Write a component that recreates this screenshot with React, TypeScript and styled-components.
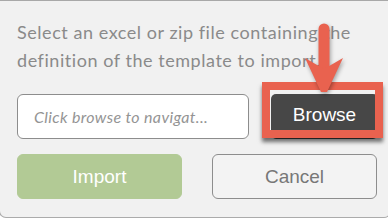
import React, { FC } from 'react';
import styled, { createGlobalStyle } from 'styled-components';

const Global = createGlobalStyle`
  html, body { margin: 0; padding: 0; background: #ffffff; }
  body { width: 388px; height: 218px; overflow: hidden; }
`;

const Panel = styled.div`
  position: relative;
  box-sizing: border-box;
  width: 392px;
  height: 218px;
  margin-left: -1px;
  background: #f1f1f1;
  border: 1px solid #ababab;
  border-top-color: #a8a8a8;
  border-radius: 0 0 7px 7px;
  padding: 17px 0 0 17px;
`;

const Message = styled.p`
  margin: 0;
  font-family: Lato, 'Liberation Sans', sans-serif;
  font-size: 18px;
  letter-spacing: 0.55px;
  line-height: 28px;
  color: #8a8a8a;
  width: 352px;
`;

const Row = styled.div<{ gap: number }>`
  display: flex;
  align-items: stretch;
  gap: ${(p) => p.gap}px;
  height: 45px;
`;

const FileRow = styled(Row)`
  margin-top: 20px;
`;

const ActionRow = styled(Row)`
  margin-top: 15px;
`;

const PathInput = styled.input`
  box-sizing: border-box;
  width: 232px;
  height: 45px;
  border: 1px solid #8d8d8d;
  border-radius: 6px;
  background: #ffffff;
  padding: 0 15px 0 16px;
  font-family: Lato, 'Liberation Sans', sans-serif;
  font-size: 16px;
  letter-spacing: 0.35px;
  font-style: italic;
  color: #888;
  outline: none;
  &::placeholder { color: #949494; }
`;

const BrowseButton = styled.button`
  box-sizing: border-box;
  width: 107px;
  border: none;
  border-radius: 5px;
  background: #474747;
  color: #ffffff;
  font-family: 'Liberation Sans', Arial, sans-serif;
  font-size: 19px;
  padding: 0 0 3px;
`;

const ActionButton = styled.button<{ primary?: boolean }>`
  box-sizing: border-box;
  width: 165px;
  border-radius: 6px;
  border: 1px solid ${(p) => (p.primary ? '#b2ca95' : '#8d8d8d')};
  background: ${(p) => (p.primary ? '#b2ca95' : '#f3f3f3')};
  color: ${(p) => (p.primary ? '#ffffff' : '#777777')};
  font-family: 'Liberation Sans', Arial, sans-serif;
  font-size: 19px;
`;

const Highlight = styled.div`
  position: absolute;
  left: 262px;
  top: 81px;
  width: 121px;
  height: 56px;
  box-sizing: border-box;
  border: 8px solid #e9624f;
  box-shadow: 0 4px 4px rgba(0, 0, 0, 0.55);
  pointer-events: none;
`;

const Arrow = styled.svg`
  position: absolute;
  left: 300px;
  top: 18px;
  overflow: visible;
  filter: drop-shadow(1px 2px 2px rgba(0, 0, 0, 0.35));
  pointer-events: none;
`;

const DownArrow: FC = () => (
  <Arrow width="50" height="76" viewBox="0 0 50 76">
    <line x1="24" y1="10" x2="24" y2="55" stroke="#e9624f" strokeWidth="11" strokeLinecap="round" />
    <path d="M5 39 L24 50 L43 39 L27 73 L21 73 Z" fill="#e9624f" />
  </Arrow>
);

export default function App() {
  return (
    <>
      <Global />
      <Panel>
        <Message>
          Select an excel or zip file containing the definition of the template to import.
        </Message>
        <FileRow gap={22}>
          <PathInput placeholder="Click browse to navigat..." readOnly />
          <BrowseButton>Browse</BrowseButton>
        </FileRow>
        <ActionRow gap={30}>
          <ActionButton primary>Import</ActionButton>
          <ActionButton>Cancel</ActionButton>
        </ActionRow>
        <Highlight />
        <DownArrow />
      </Panel>
    </>
  );
}
